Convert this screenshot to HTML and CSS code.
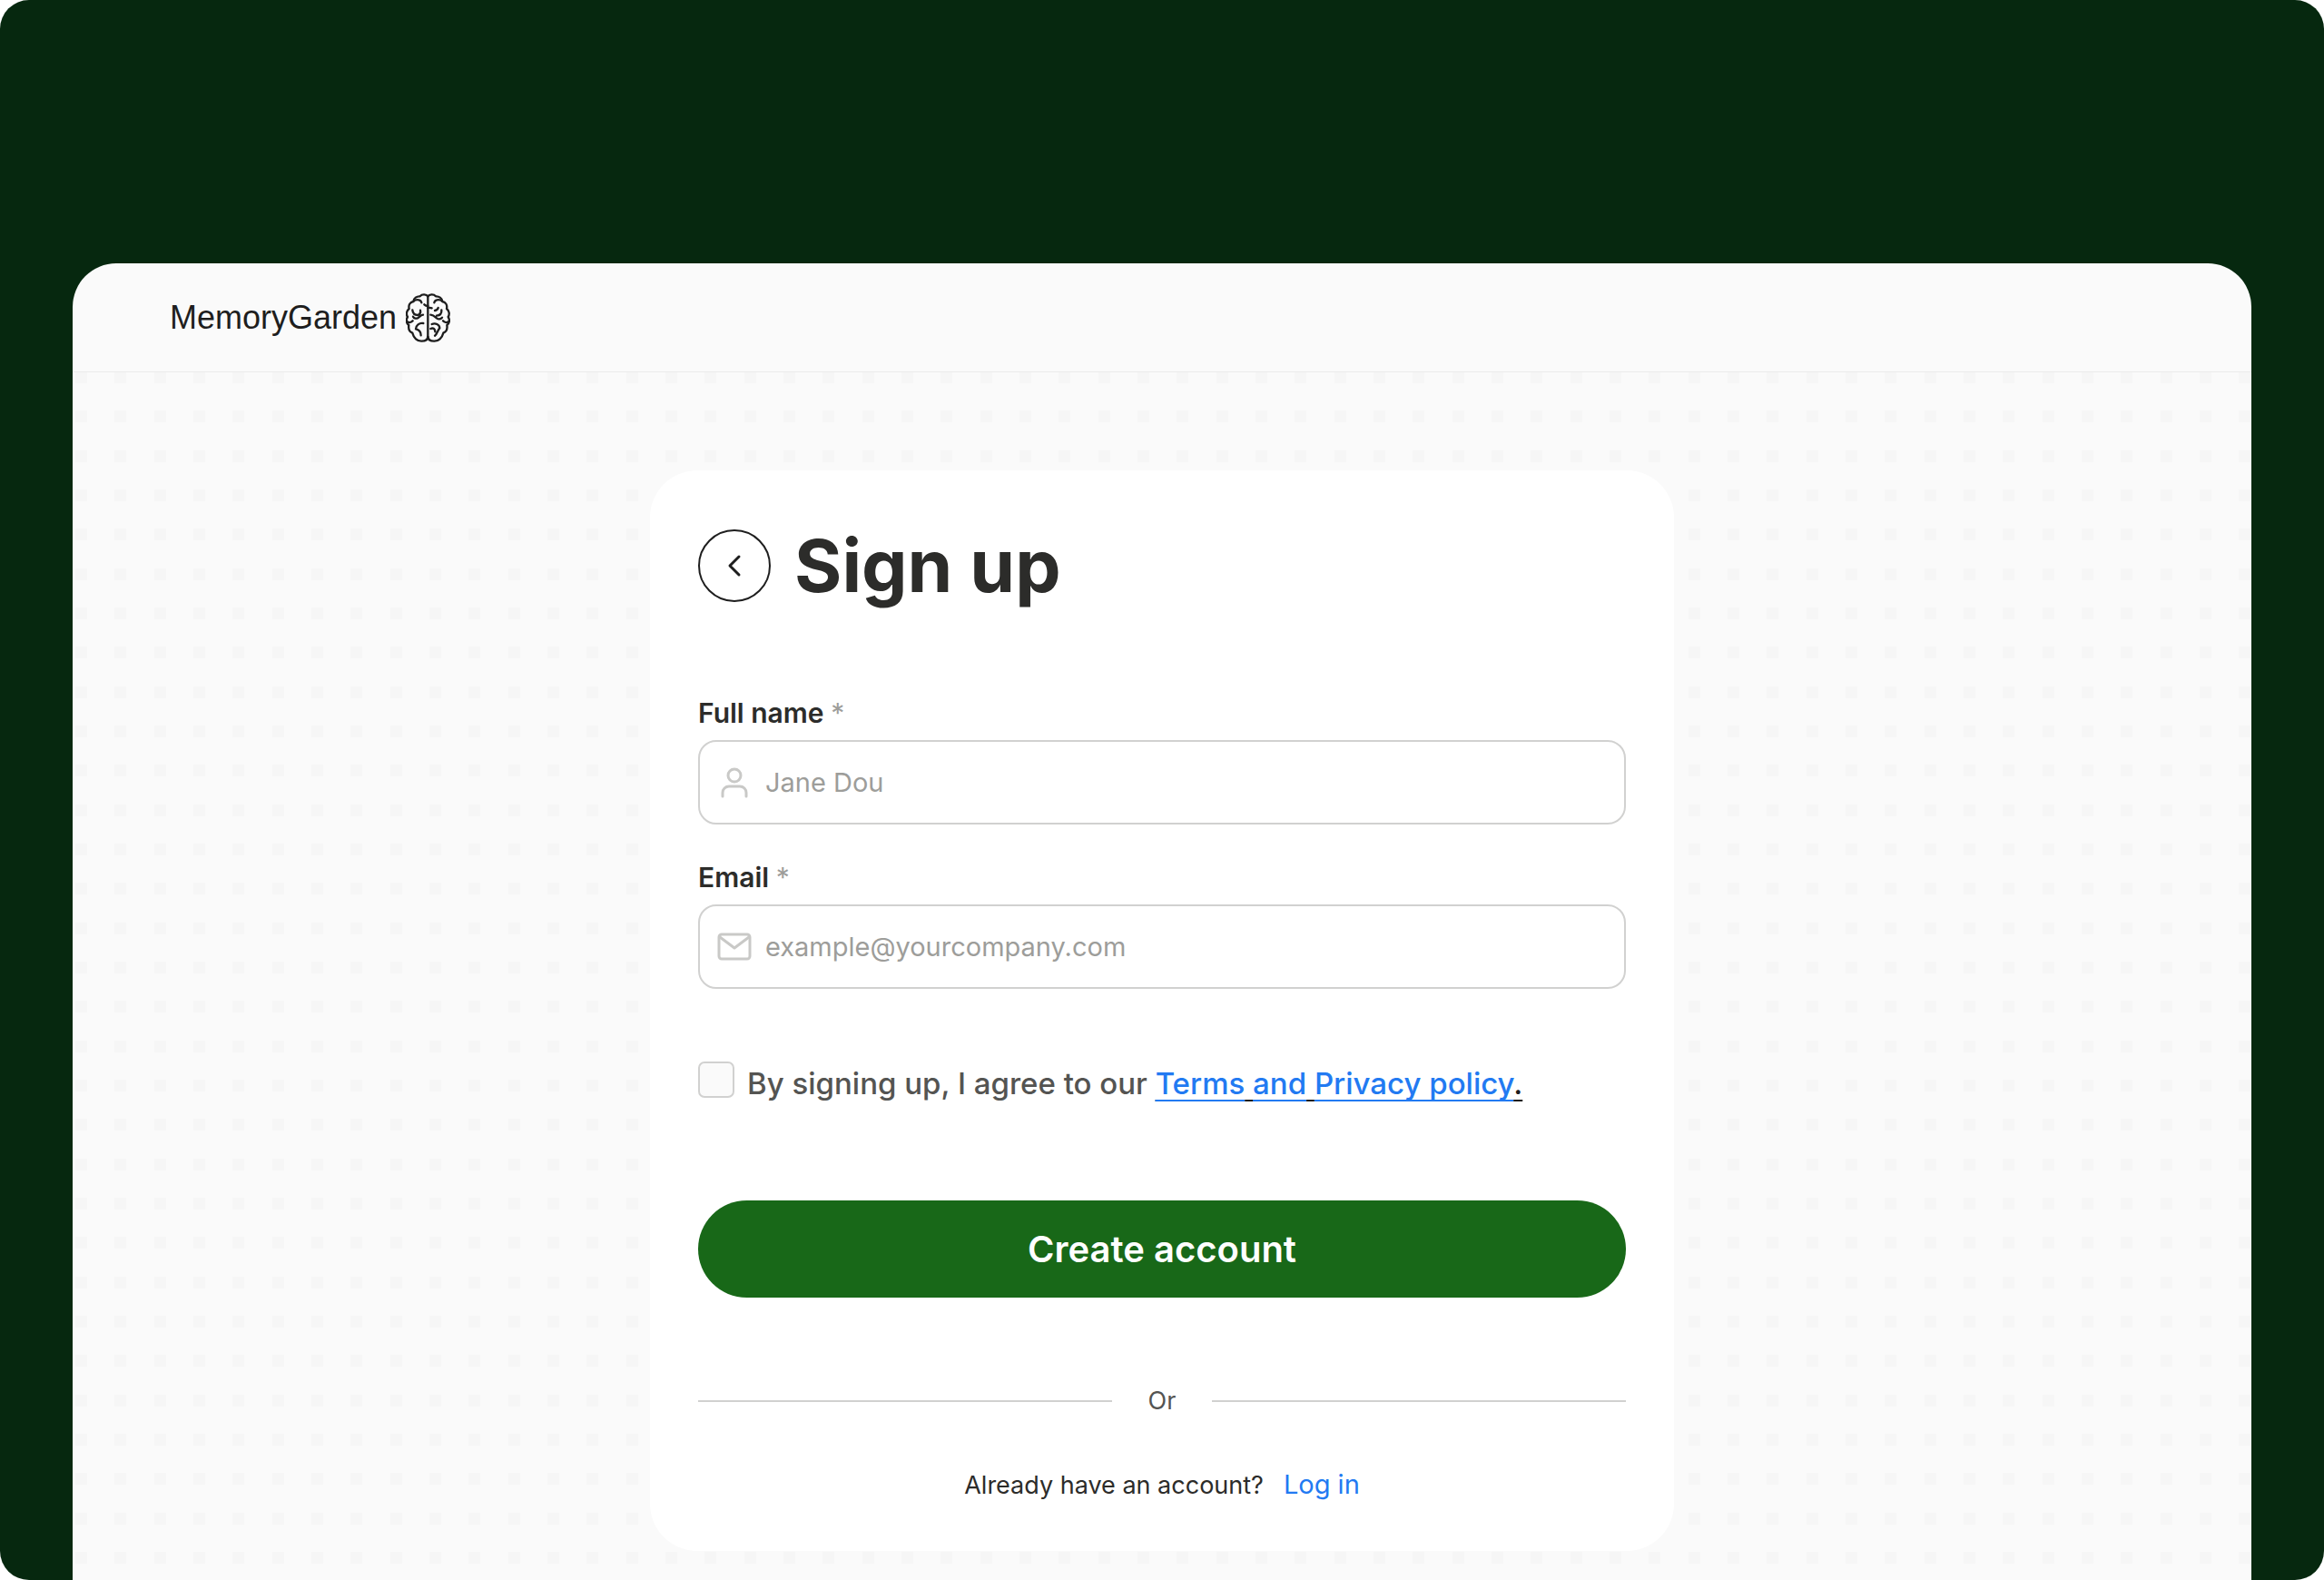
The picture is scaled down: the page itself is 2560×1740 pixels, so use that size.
FILE: index.html
```html
<!DOCTYPE html>
<html lang="en">
<head>
    <meta charset="UTF-8">
    <meta name="viewport" content="width=device-width, initial-scale=1.0">
    <title>MemoryGarden - Sign up</title>
    <link rel="stylesheet" href="styles.css">
</head>
<body>
    <div class="frame">
        <div class="window">
            <header class="header">
                <a href="#" class="brand">
                    <span>MemoryGarden</span>
                    <svg class="brand-icon" viewBox="54 40 147 162" aria-hidden="true">
                        <path d="M127 49V188"/>
                        <path d="M127 50C122 43 108 42 101 50C91 49 80 56 79 67C68 69 62 79 65 91C57 97 54 109 60 118C54 127 55 139 64 145C62 157 66 167 76 171C80 187 92 199 107 198C118 198 126 193 127 184"/>
                        <path d="M127 50C132 43 146 42 153 50C163 49 174 56 175 67C186 69 192 79 189 91C197 97 200 109 194 118C200 127 199 139 190 145C192 157 188 167 178 171C174 187 162 199 147 198C136 198 128 193 127 184"/>
                        <path d="M79 67C83 63 91 61 97 62C102 63 105 66 106 71"/>
                        <path d="M175 67C171 63 163 61 157 62C152 63 149 66 148 71"/>
                        <path d="M76 95C77 106 83 112 94 112M102 96C104 104 102 108 94 112M111 111C103 112 101 117 95 121C88 125 81 123 78 117"/>
                        <path d="M172 95C173 107 167 113 156 114M150 97C156 96 160 93 161 88M136 111C146 112 150 117 156 122C162 127 169 126 174 120"/>
                        <path d="M58 133C65 138 73 136 77 131M196 133C189 138 181 136 177 131"/>
                        <path d="M112 139C98 137 88 146 87 158M87 158C98 160 104 168 104 179"/>
                        <path d="M140 142C152 137 165 143 166 155M166 155C158 163 159 174 150 180M136 157C145 153 151 158 151 167"/>
                        <path d="M127 82C122 82 118 80 115 77M127 88C132 87 136 87 140 89"/>
                    </svg>
                </a>
            </header>
            <main class="main">
                <form class="card">
                    <div class="title-row">
                        <button type="button" class="back-button" aria-label="Back">
                            <svg viewBox="0 0 32 32" aria-hidden="true"><path d="M21 6L11 16L21 26"/></svg>
                        </button>
                        <h1>Sign up</h1>
                    </div>

                    <div class="field">
                        <label for="fullName">Full name <span class="required">*</span></label>
                        <div class="input-box">
                            <svg viewBox="0 0 40 40" aria-hidden="true">
                                <circle cx="20" cy="12" r="7"/>
                                <path d="M7 35V31A7 7 0 0 1 14 24H26A7 7 0 0 1 33 31V35"/>
                            </svg>
                            <input type="text" id="fullName" name="fullName" placeholder="Jane Dou" required>
                        </div>
                    </div>

                    <div class="field">
                        <label for="email">Email <span class="required">*</span></label>
                        <div class="input-box">
                            <svg viewBox="0 0 40 40" aria-hidden="true">
                                <rect x="3" y="6" width="34" height="27" rx="3"/>
                                <path d="M4 9L20 21L36 9"/>
                            </svg>
                            <input type="email" id="email" name="email" placeholder="example@yourcompany.com" required>
                        </div>
                    </div>

                    <div class="agree">
                        <input type="checkbox" id="agree" name="agree">
                        <label for="agree">By signing up, I agree to our <a href="#" class="terms"><span>Terms</span> <span>and</span> <span>Privacy policy</span>.</a></label>
                    </div>

                    <button type="submit" class="submit-button">Create account</button>

                    <div class="divider">Or</div>

                    <p class="login">Already have an account? <a href="#">Log in</a></p>
                </form>
            </main>
        </div>
    </div>
</body>
</html>
```

FILE: styles.css
```css
* {
    box-sizing: border-box;
}
body {
    margin: 0;
    background-color: #ffffff;
    color: #2c2c2a;
    font-family: Inter, "Liberation Sans", sans-serif;
}
.frame {
    display: flex;
    min-height: 100vh;
    padding: 290px 80px 0;
    background-color: #06280f;
    border-radius: 32px;
}
.window {
    display: flex;
    flex-direction: column;
    flex: 1;
    overflow: hidden;
    background-color: #fafafa;
    border-radius: 48px 48px 0 0;
}
.header {
    display: flex;
    align-items: center;
    height: 120px;
    padding: 0 107px;
    border-bottom: 1px solid #ebebeb;
}
.brand {
    display: flex;
    align-items: center;
    gap: 10px;
    color: #1e1e1e;
    font-family: "Liberation Sans", Arial, sans-serif;
    font-size: 36px;
    text-decoration: none;
}
.brand-icon {
    width: 49px;
    height: 54px;
    fill: none;
    stroke: #1e1e1e;
    stroke-width: 7;
    stroke-linecap: round;
    stroke-linejoin: round;
}
/* dots: grey columns, with page-coloured stripes over the gaps between rows */
.main {
    flex: 1;
    padding: 108px 24px 30px;
    background-image:
        linear-gradient(180deg, transparent 13px, #fafafa 13px 43px, transparent 43px 56px, #fafafa 56px 87px, transparent 87px 100px, #fafafa 100px),
        linear-gradient(90deg, #f6f6f6 13px, #fafafa 13px 43px, #f6f6f6 43px 56px, #fafafa 56px 87px, #f6f6f6 87px 100px, #fafafa 100px);
    background-size: 130px 130px;
    background-position: 0 -1px, 3px 0;
}
.card {
    max-width: 1128px;
    margin: 0 auto;
    padding: 57px 53px 54px;
    background-color: #ffffff;
    border-radius: 52px;
}
.title-row {
    display: flex;
    align-items: center;
    gap: 26px;
    margin-bottom: 96px;
}
h1 {
    margin: 0;
    font-size: 80px;
    line-height: 96px;
    font-weight: 700;
}
.back-button {
    display: flex;
    align-items: center;
    justify-content: center;
    width: 80px;
    height: 80px;
    padding: 0;
    background: none;
    border: 2px solid #1e1e1e;
    border-radius: 50%;
    cursor: pointer;
}
.back-button svg {
    width: 32px;
    height: 32px;
    fill: none;
    stroke: #1e1e1e;
    stroke-width: 3;
    stroke-linecap: round;
    stroke-linejoin: round;
}
.field {
    margin-bottom: 40px;
}
.field label {
    display: block;
    margin-bottom: 12px;
    font-size: 30px;
    line-height: 36px;
    font-weight: 600;
}
.required {
    color: #9d9d9a;
    font-weight: 400;
}
.input-box {
    display: flex;
    align-items: center;
    gap: 14px;
    height: 93px;
    padding: 0 18px;
    border: 2px solid #d1d1d0;
    border-radius: 20px;
}
.input-box svg {
    flex: none;
    width: 40px;
    height: 40px;
    fill: none;
    stroke: #c9c9c7;
    stroke-width: 3;
    stroke-linecap: round;
    stroke-linejoin: round;
}
.input-box input {
    flex: 1;
    min-width: 0;
    padding: 0;
    background: none;
    border: none;
    outline: none;
    color: #2c2c2a;
    font-family: inherit;
    font-size: 29px;
}
.input-box input::placeholder {
    color: #9d9d9a;
    opacity: 1;
}
.agree {
    display: flex;
    align-items: flex-start;
    gap: 14px;
    margin-top: 80px;
    color: #545452;
    font-size: 33px;
    line-height: 48px;
    font-weight: 500;
}
.agree input {
    appearance: none;
    flex: none;
    width: 40px;
    height: 40px;
    margin: 0;
    background-color: #fafafa;
    border: 2px solid #d1d1d0;
    border-radius: 7px;
}
.agree input:checked {
    background-color: #186818;
}
.terms,
.terms span {
    color: #1e1e1e;
    text-decoration: underline 2px;
    text-decoration-skip-ink: none;
    text-underline-offset: 6px;
}
.terms span {
    color: #227af2;
}
.submit-button {
    display: block;
    width: 100%;
    height: 107px;
    margin-top: 105px;
    background-color: #186818;
    border: none;
    border-radius: 54px;
    color: #ffffff;
    font-family: inherit;
    font-size: 40px;
    font-weight: 600;
    cursor: pointer;
}
.divider {
    display: flex;
    align-items: center;
    gap: 40px;
    margin: 96px 0 56px;
    color: #545452;
    font-size: 27px;
    line-height: 36px;
}
.divider::before,
.divider::after {
    content: "";
    flex: 1;
    height: 2px;
    background-color: #d1d1d0;
}
.login {
    display: flex;
    align-items: baseline;
    justify-content: center;
    gap: 22px;
    margin: 0;
    font-size: 27px;
    line-height: 36px;
}
.login a {
    color: #227af2;
    font-size: 29px;
    text-decoration: none;
}
```
